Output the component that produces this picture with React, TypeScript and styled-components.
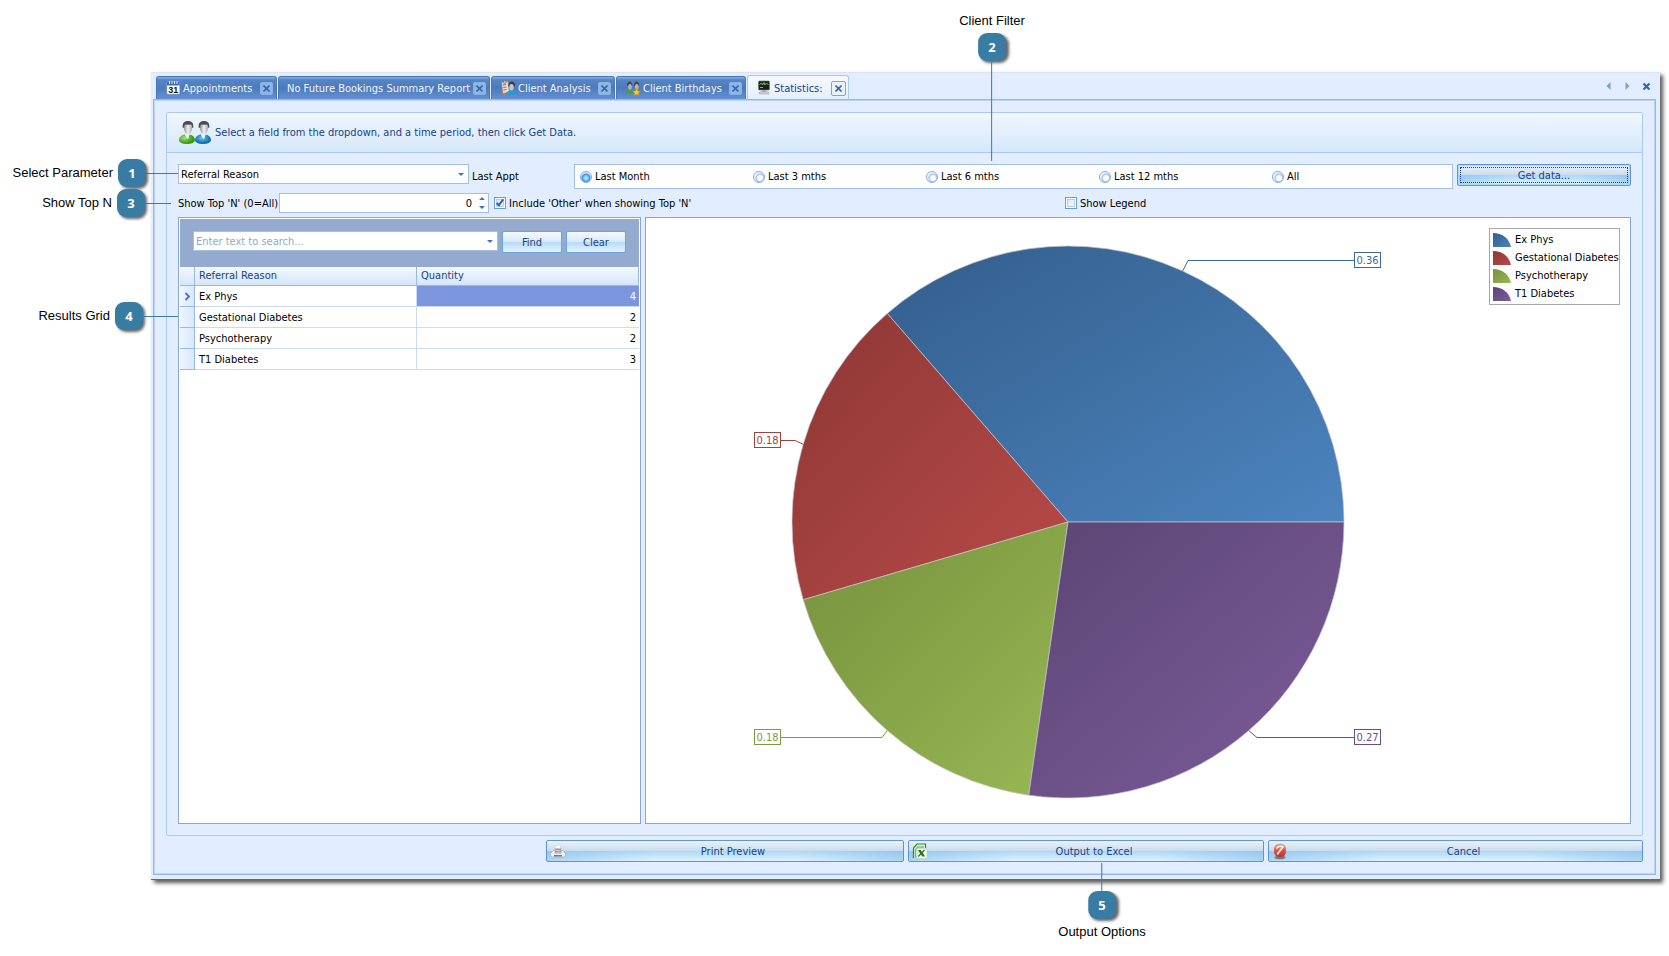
import React, { useState } from 'react';
import styled, { createGlobalStyle, css } from 'styled-components';

const ui = '"DejaVu Sans Condensed", "Noto Sans", sans-serif';
const ink = '#15428b';
const line = '#a9c9f2';

const GlobalStyle = createGlobalStyle`
  *, *::before, *::after { box-sizing: border-box; }
  body { margin: 0; background: #fff; font: 11px/15px ${ui}; color: #000; }
  button, input, select { font: inherit; color: inherit; margin: 0; padding: 0; }
  button { cursor: pointer; }
`;

const Page = styled.div`
  display: flex;
  min-width: 1240px;
  min-height: 100vh;
  padding: 72px 9px 77px 151px;
`;

const Window = styled.main`
  flex: 1;
  min-width: 0;
  display: flex;
  flex-direction: column;
  padding: 0 4px 4px 2px;
  background: #e2eeff;
  border-top: 1px solid #dde4ee;
  border-bottom: 1px solid #3f70ad;
  box-shadow: 3px 3px 4px rgba(0, 0, 0, 0.65);
`;

/* ---------- tab strip ---------- */

const TabStrip = styled.div`
  display: flex;
  align-items: flex-end;
  justify-content: space-between;
  height: 26px;
  padding-left: 3px;
`;

const TabList = styled.div`
  display: flex;
  align-items: flex-end;
  gap: 1px;
`;

const TabBox = styled.div<{ $active?: boolean; $width: number }>`
  display: flex;
  align-items: center;
  width: ${p => p.$width}px;
  height: 23px;
  padding: 0 3px 0 8px;
  border: 1px solid #4a77b5;
  border-bottom: 0;
  border-radius: 3px 3px 0 0;
  color: #f2f7ff;
  background: linear-gradient(#88afe2 0, #5784c4 3px, #4c7abc 50%, #6492d0 100%);
  ${p => p.$active && css`
    height: 25px;
    margin-bottom: -1px;
    padding-right: 2px;
    border-color: ${line};
    color: ${ink};
    background: linear-gradient(#f6faff, #e2eeff);
  `}
`;

const TabButton = styled.button`
  flex: 1;
  display: flex;
  align-items: center;
  gap: 2px;
  border: 0;
  background: none;
  white-space: nowrap;
  text-align: left;
`;

const TabClose = styled.button<{ $active?: boolean }>`
  display: flex;
  align-items: center;
  justify-content: center;
  width: ${p => (p.$active ? 15 : 13)}px;
  height: ${p => (p.$active ? 15 : 13)}px;
  border: 1px solid ${p => (p.$active ? '#7fa6dc' : '#8cb2e4')};
  border-radius: 2px;
  background: ${p => (p.$active ? '#eaf3ff' : '#8fb5e5')};
  color: #3468ae;
`;

const StripNav = styled.div`
  display: flex;
  align-items: center;
  gap: 10px;
  height: 26px;
  padding-right: 5px;
`;

const NavButton = styled.button`
  display: flex;
  align-items: center;
  justify-content: center;
  width: 9px;
  height: 14px;
  border: 0;
  background: none;
  color: #7f9fc9;
`;

/* ---------- frame and group ---------- */

const Frame = styled.section`
  flex: 1;
  display: flex;
  flex-direction: column;
  gap: 4px;
  padding: 12px;
  border: 1px solid #93b9ea;
  box-shadow: inset 0 0 0 1px #b9d4f8;
`;

const Group = styled.div`
  flex: 1;
  display: flex;
  flex-direction: column;
  border: 1px solid ${line};
  border-radius: 2px;
`;

const GroupHeader = styled.header`
  display: flex;
  align-items: center;
  gap: 2px;
  height: 40px;
  padding-left: 10px;
  border-bottom: 1px solid ${line};
  background: linear-gradient(#f0f7ff, #d6e7fb);
  color: ${ink};
`;

const GroupBody = styled.div`
  flex: 1;
  display: flex;
  flex-direction: column;
  gap: 4px;
  padding: 11px;
`;

/* ---------- form parts ---------- */

const FilterRow = styled.div`
  display: flex;
  align-items: flex-start;
`;

const OptionRow = styled.div`
  display: grid;
  grid-template-columns: 887fr 566fr;
  align-items: center;
`;

const Inline = styled.div`
  display: flex;
  align-items: center;
  gap: 5px;
  position: relative;
`;

const Field = styled.div<{ $width?: number }>`
  position: relative;
  height: 20px;
  ${p => (p.$width ? `width: ${p.$width}px;` : 'flex: 1;')}
  > svg { position: absolute; right: 3px; top: 0; pointer-events: none; }
`;

const fieldBox = css`
  display: block;
  width: 100%;
  height: 20px;
  border: 1px solid #a3bfe3;
  border-radius: 0;
  background: #fff;
  outline: 0;
`;

const Select = styled.select`
  ${fieldBox}
  appearance: none;
  padding: 0 18px 0 2px;
`;

const TextBox = styled.input<{ $right?: boolean }>`
  ${fieldBox}
  padding: 0 16px 0 2px;
  text-align: ${p => (p.$right ? 'right' : 'left')};
  &::placeholder { color: #8ea9cc; opacity: 1; }
`;

const TopLabel = styled.label`
  width: 96px;
  white-space: nowrap;
`;

const FieldCaption = styled.span`
  width: 105px;
  height: 25px;
  padding-left: 3px;
  line-height: 26px;
`;

const RadioGroup = styled.div`
  position: relative;
  flex: 1;
  display: grid;
  grid-template-columns: repeat(5, 1fr);
  align-items: center;
  height: 25px;
  margin-right: 4px;
  padding: 0 7px 0 5px;
  border: 1px solid #a3bfe3;
  background: #fff;
`;

const Check = styled.label`
  display: inline-flex;
  align-items: center;
  gap: 3px;
`;

const RadioInput = styled.input`
  appearance: none;
  width: 12px;
  height: 12px;
  border: 1px solid #86abe0;
  border-radius: 50%;
  background: radial-gradient(circle at 60% 60%, #fff 0 2px, #dfeafb 3px, #9bbcea 4px, #eef5ff 5px);
  &:checked {
    background: radial-gradient(circle at 50% 60%, #a6e2ff 0 1px, #55b4f4 3px, #3f86d8 4px, #d8e9ff 5px);
  }
`;

const CheckInput = styled.input`
  appearance: none;
  display: grid;
  place-items: center;
  width: 12px;
  height: 12px;
  border: 1px solid #6c9bdc;
  background: linear-gradient(135deg, #d3e2f7, #fff);
  box-shadow: inset 0 0 0 1px #fff, inset 0 0 0 2px #b3cdf0;
  &:checked::after {
    content: '';
    width: 4px;
    height: 8px;
    margin-top: -2px;
    border: solid #2b62b4;
    border-width: 0 2px 2px 0;
    transform: rotate(38deg);
  }
`;

const Button = styled.button<{ $width?: number; $focus?: boolean; $icon?: boolean }>`
  position: relative;
  width: ${p => (p.$width ? `${p.$width}px` : '100%')};
  height: 22px;
  padding-left: ${p => (p.$icon ? 16 : 0)}px;
  border: 1px solid #5b95e0;
  border-radius: 2px;
  color: ${ink};
  background:
    linear-gradient(90deg, rgba(120, 178, 232, 0.45), rgba(255, 255, 255, 0) 30%, rgba(255, 255, 255, 0) 70%, rgba(120, 178, 232, 0.45)) 0 100% / 100% 50% no-repeat,
    linear-gradient(#edf2f8 0, #c8dcf0 49%, #aed8f6 50%, #ddf3fe 100%);
  > svg { position: absolute; left: 3px; top: 2px; }
  ${p => p.$focus && css`
    outline: 1px dotted #15428b;
    outline-offset: -4px;
    box-shadow: inset 0 0 0 1px #a8dcf8;
  `}
`;

const PanelButton = styled(Button)`
  border-color: #6da3e6;
  background: linear-gradient(#f5f9fe 0, #dbe9f8 49%, #b5daf7 50%, #e3f5ff 100%);
`;

/* ---------- results ---------- */

const Panels = styled.div`
  flex: 1;
  display: grid;
  grid-template-columns: 463px 1fr;
  gap: 4px;
`;

const Panel = styled.div`
  position: relative;
  display: flex;
  flex-direction: column;
  min-width: 0;
  padding: 1px;
  border: 1px solid #86a7d3;
  background: #fff;
`;

const SearchBar = styled.div`
  display: flex;
  align-items: flex-start;
  gap: 4px;
  height: 48px;
  padding: 12px 13px 0;
  background: #94abcf;
`;

const Results = styled.table`
  width: 100%;
  table-layout: fixed;
  border-collapse: separate;
  border-spacing: 0;
`;

const HeadCell = styled.th<{ $width?: number }>`
  ${p => p.$width && `width: ${p.$width}px;`}
  height: 19px;
  padding: 0 4px 2px;
  border: solid #98b9e3;
  border-width: 0 1px 1px 0;
  background: linear-gradient(#f2f8ff, #d5e6fa);
  color: ${ink};
  font-weight: 400;
  text-align: left;
`;

const Cell = styled.td<{ $kind?: 'mark' | 'number'; $selected?: boolean }>`
  height: 21px;
  padding: 0 4px;
  border: solid #cadcf2;
  border-width: 0 1px 1px 0;
  ${p => p.$kind === 'mark' && css`
    padding: 0;
    border-color: #98b9e3;
    background: linear-gradient(90deg, #eef5ff, #d8e8fb);
    > svg { display: block; margin: 0 auto; }
  `}
  ${p => p.$kind === 'number' && css`
    padding-right: 3px;
    border-right: 0;
    text-align: right;
  `}
  ${p => p.$selected && 'background: #7b96de; color: #fff;'}
`;

const ChartSvg = styled.svg`
  flex: 1;
  display: block;
  width: 100%;
  min-height: 0;
`;

const Legend = styled.ul`
  position: absolute;
  top: 10px;
  right: 10px;
  display: grid;
  gap: 3px;
  width: 131px;
  margin: 0;
  padding: 3px;
  list-style: none;
  border: 1px solid #a8a8a8;
  background: #fff;
`;

const LegendItem = styled.li`
  display: flex;
  align-items: center;
  gap: 4px;
  white-space: nowrap;
`;

const Footer = styled.footer`
  display: grid;
  grid-template-columns: 358fr 356fr 375fr;
  gap: 4px;
  padding-left: 380px;
`;

const FooterItem = styled.div`
  position: relative;
  display: flex;
`;

/* ---------- call-outs ---------- */

const Badge = styled.span`
  flex: none;
  width: 28px;
  height: 28px;
  border-radius: 9px;
  background: #387ba3;
  box-shadow: 2px 2px 3px rgba(0, 0, 0, 0.6);
  color: #fff;
  font: bold 13px/28px "Open Sans", sans-serif;
  text-align: center;
`;

const CallText = styled.span`
  font: 13px/16px "Liberation Sans", Arial, sans-serif;
  white-space: nowrap;
  color: #000;
`;

const Lead = styled.span<{ $length: number; $vertical?: boolean }>`
  flex: none;
  background: #387ba3;
  width: ${p => (p.$vertical ? 1 : p.$length)}px;
  height: ${p => (p.$vertical ? p.$length : 1)}px;
`;

const SideCall = styled.div<{ $top: number; $right?: string }>`
  position: absolute;
  z-index: 2;
  top: ${p => p.$top}px;
  right: ${p => p.$right || '100%'};
  display: flex;
  align-items: center;
  ${CallText} { margin-right: 5px; }
`;

const UprightCall = styled.div<{ $left: string; $below?: boolean }>`
  position: absolute;
  z-index: 2;
  left: ${p => p.$left};
  ${p => (p.$below ? 'top: 23px;' : 'bottom: 27px;')}
  display: flex;
  flex-direction: ${p => (p.$below ? 'column' : 'column-reverse')};
  align-items: center;
  transform: translateX(-50%);
  ${CallText} { margin: ${p => (p.$below ? 5 : 4)}px 0; }
`;

type CallProps = { n: number; text: string; length: number };
const CallParts = ({ n, text, length, vertical }: CallProps & { vertical?: boolean }) =>
  vertical ? (
    <><Lead $length={length} $vertical /><Badge>{n}</Badge><CallText>{text}</CallText></>
  ) : (
    <><CallText>{text}</CallText><Badge>{n}</Badge><Lead $length={length} /></>
  );

/* ---------- icons ---------- */

const CrossIcon = ({ size = 7 }: { size?: number }) => (
  <svg width={size} height={size} viewBox="0 0 7 7" aria-hidden="true">
    <path d="M.5 .5l6 6M6.500 .5l-6 6" stroke="currentColor" strokeWidth="1.600" />
  </svg>
);

const CalendarIcon = () => (
  <svg width="16" height="16" viewBox="0 0 16 16" aria-hidden="true">
    <rect x="2" y="2" width="12.500" height="12" rx="1" fill="#fff" stroke="#b9bfc9" strokeWidth=".6" />
    <rect x="2" y="2" width="12.500" height="3.500" fill="#3f6cab" />
    <path d="M4.500 1v3M7 1v3M9.500 1v3M12 1v3" stroke="#e3e9f2" />
    <text x="8.200" y="12.500" textAnchor="middle" fontSize="9" fontWeight="700" fontFamily="Liberation Sans" fill="#111">31</text>
  </svg>
);

const AnalysisIcon = () => (
  <svg width="16" height="16" viewBox="0 0 16 16" aria-hidden="true">
    <path d="M1.500 2L8 1l1.500 11-7 2z" fill="#e2dcd7" stroke="#8e7f76" />
    <path d="M3 5l3-.5M3.300 7.500l3-.5M3.500 10l3-.5" stroke="#857771" />
    <circle cx="4.800" cy="2" r="1.500" fill="#c9c0b8" stroke="#7a6d65" strokeWidth=".6" />
    <path d="M6.500 15c0-3 2-4.500 4.500-4.500s5 1.500 5 4.500z" fill="#2c9bd2" />
    <path d="M8.500 6.500c0-3.500 1-5 3.200-5s3.600 1.500 3.300 5z" fill="#3d3d3f" />
    <ellipse cx="11.500" cy="7.300" rx="2.200" ry="3.300" fill="#c3c6c8" />
    <path d="M1.500 13l4 1.500" stroke="#c98353" strokeWidth="1.500" />
  </svg>
);

const BirthdayIcon = () => (
  <svg width="16" height="16" viewBox="0 0 16 16" aria-hidden="true">
    <path d="M1 13.500c0-3 1-4 3.500-4s3.500 1 3.500 4z" fill="#4c9a45" />
    <path d="M8 13.500c0-3 1-4 3.500-4s4 1 4 4z" fill="#5b8a6a" />
    <path d="M2 6c0-3 .8-4.500 2.600-4.500S7.300 3 7.300 6zM9 6c0-3 .8-4.500 2.600-4.500s2.700 1.500 2.700 4.500z" fill="#4b4642" />
    <ellipse cx="5" cy="6.800" rx="1.800" ry="2.900" fill="#bab5b0" />
    <ellipse cx="11.800" cy="6.800" rx="1.800" ry="2.900" fill="#bab5b0" />
    <path d="M11.500 8.500l1.200 2.400 2.600.3-1.900 1.800.5 2.600-2.400-1.300-2.300 1.300.4-2.600-1.900-1.800 2.700-.3z" fill="#f9cb2e" stroke="#c98e15" strokeWidth=".5" />
  </svg>
);

const MonitorIcon = () => (
  <svg width="16" height="16" viewBox="0 0 16 16" aria-hidden="true">
    <rect x="2.500" y="1" width="11" height="9" rx="1" fill="#1b1d1c" stroke="#6c7071" strokeWidth=".6" />
    <path d="M3.500 4.500l2-1.500 1 2L8 2.500l1 2.500 1.500-2L12.500 5M4 7.500h3" stroke="#5fd42e" fill="none" />
    <path d="M6.500 10h3l1 2h-5z" fill="#a9adb1" />
    <path d="M3 12.500l2-.8h6l2 .8V14H3z" fill="#cdd0d4" stroke="#9a9ea3" strokeWidth=".5" />
  </svg>
);

const Person = ({ x, body }: { x: number; body: string }) => (
  <g transform={`translate(${x} 0)`}>
    <path d="M0 21c0-3.500 4-6 8-6s8 2.500 8 6c0 2.500-3.500 4-8 4s-8-1.500-8-4z" fill={`url(#${body})`} />
    <path d="M5.500 13.500h6l-2.500 6.500c-2-1-3-3-3.500-6.500z" fill="#eef0f1" />
    <ellipse cx="9" cy="9" rx="4" ry="6.500" fill="url(#skin)" />
    <path d="M3.800 9C3 4.500 5 2 9 2s6 2.500 5.200 7l-1.200-.5c0-2-.5-2.700-1.500-3-2 .5-4 .3-5 0-1 .7-1.200 1.700-1.300 3z" fill="#4c4d4f" />
  </g>
);

const PeopleIcon = () => (
  <svg width="36" height="27" viewBox="0 0 36 27" aria-hidden="true">
    <defs>
      <radialGradient id="bodyGreen" cx=".35" cy=".4"><stop offset="0" stopColor="#a4e36c" /><stop offset="1" stopColor="#3c9c22" /></radialGradient>
      <radialGradient id="bodyBlue" cx=".45" cy=".4"><stop offset="0" stopColor="#6cc4ec" /><stop offset="1" stopColor="#1273ae" /></radialGradient>
      <linearGradient id="skin"><stop offset="0" stopColor="#8e9193" /><stop offset=".5" stopColor="#f0f1f1" /><stop offset="1" stopColor="#a4a6a8" /></linearGradient>
    </defs>
    <Person x={2} body="bodyGreen" />
    <Person x={18} body="bodyBlue" />
  </svg>
);

const PrinterIcon = () => (
  <svg width="16" height="16" viewBox="0 0 16 16" aria-hidden="true">
    <path d="M5 2.500L10 1.500 11 7H5z" fill="#f8f8f9" stroke="#c3c5c9" strokeWidth=".5" />
    <path d="M.5 10.500L3 7.500h10l2.500 3v2l-2 1.500h-11l-2-1.500z" fill="#f3f3f4" stroke="#9fa1a5" strokeWidth=".6" />
    <path d="M5 5.500h6l.5 5h-7z" fill="#9a9da2" />
    <path d="M5.500 7.500h5M5.500 9.300h5" stroke="#c6c9cd" />
    <path d="M4 12.800h8" stroke="#56595e" strokeWidth="1.200" />
  </svg>
);

const ExcelIcon = () => (
  <svg width="16" height="16" viewBox="0 0 16 16" aria-hidden="true">
    <path d="M1.500 15V5L5 1h8.500v4" fill="#e4f3e0" stroke="#2c8a2c" strokeWidth="1.200" />
    <path d="M3.500 14V6.500L6 4h6" stroke="#79bd75" strokeWidth="1.300" fill="none" />
    <path d="M5 5.500l10 .5v9.500H5z" fill="#fff" stroke="#b4ceb0" strokeWidth=".7" />
    <path d="M5.800 7h2.900L13.200 13.500h-3z" fill="#1f7a1c" />
    <path d="M12.500 7L6.300 13.500" stroke="#1f7a1c" strokeWidth="1.300" />
  </svg>
);

const CancelIcon = () => (
  <svg width="16" height="17" viewBox="0 0 16 17" aria-hidden="true">
    <defs><linearGradient id="stop" x1="0" y1="0" x2="0" y2="1"><stop offset="0" stopColor="#f5a59d" /><stop offset=".6" stopColor="#e2483c" /><stop offset="1" stopColor="#b8352b" /></linearGradient></defs>
    <ellipse cx="8" cy="14.500" rx="5.500" ry="1.800" fill="#4c5866" opacity=".7" />
    <rect x="2" y=".5" width="12" height="13.500" rx="5.500" fill="url(#stop)" />
    <path d="M4.800 5c1.500-1.500 4-2 6.200-1.200M11 3.800L5.500 11" stroke="#fff" strokeWidth="1.500" fill="none" strokeLinecap="round" />
  </svg>
);

const DropArrow = () => (
  <svg width="10" height="20" viewBox="0 0 10 20" aria-hidden="true"><path d="M2 9h6L5 12z" fill="#3f74bd" /></svg>
);

const SpinArrows = () => (
  <svg width="8" height="20" viewBox="0 0 8 20" aria-hidden="true">
    <path d="M1 7h6L4 4zM1 13h6L4 16z" fill="#3f74bd" />
  </svg>
);

const RowMark = () => (
  <svg width="7" height="9" viewBox="0 0 7 9" aria-hidden="true"><path d="M1.500 1L5 4.500 1.500 8" stroke="#4573b5" strokeWidth="1.800" fill="none" /></svg>
);

/* ---------- data ---------- */

const tabs = [
  { title: 'Appointments', width: 121, icon: <CalendarIcon /> },
  { title: 'No Future Bookings Summary Report', width: 212 },
  { title: 'Client Analysis', width: 124, icon: <AnalysisIcon /> },
  { title: 'Client Birthdays', width: 130, icon: <BirthdayIcon /> },
  { title: 'Statistics:', width: 102, icon: <MonitorIcon />, active: true },
];

const periods = ['Last Month', 'Last 3 mths', 'Last 6 mths', 'Last 12 mths', 'All'];

const rows = [
  { name: 'Ex Phys', count: 4, from: '#335e8c', to: '#4c84be', ink: '#3b689f', at: [707, 42], elbow: 541 },
  { name: 'Gestational Diabetes', count: 2, from: '#8d3735', to: '#b94b48', ink: '#a5403d', at: [107, 222], elbow: 148 },
  { name: 'Psychotherapy', count: 2, from: '#76913d', to: '#98b854', ink: '#7d9a44', at: [107, 519], elbow: 235 },
  { name: 'T1 Diabetes', count: 3, from: '#5b4674', to: '#7d5c9b', ink: '#694f87', at: [707, 519], elbow: 610 },
];

/* ---------- chart ---------- */

const CX = 421;
const CY = 303;
const R = 276;

function PieChart() {
  const total = rows.reduce((sum, r) => sum + r.count, 0);
  const point = (a: number) => [CX + R * Math.cos(a), CY - R * Math.sin(a)];
  let angle = 0;
  return (
    <ChartSvg viewBox="0 0 982 603" role="img" aria-label="Share of clients by referral reason">
      {rows.map((r, i) => {
        const start = angle;
        angle += (r.count / total) * Math.PI * 2;
        const [x1, y1] = point(start);
        const [x2, y2] = point(angle);
        const [mx, my] = point((start + angle) / 2);
        const [lx, ly] = r.at;
        const edge = lx < CX ? lx + 27 : lx;
        return (
          <g key={r.name}>
            <defs>
              <linearGradient id={`slice${i}`} x1="0" y1="0" x2="1" y2="1">
                <stop offset="0" stopColor={r.from} />
                <stop offset="1" stopColor={r.to} />
              </linearGradient>
            </defs>
            <path d={`M${CX} ${CY}L${x1} ${y1}A${R} ${R} 0 0 0 ${x2} ${y2}Z`} fill={`url(#slice${i})`} stroke="#c9c3cf" strokeWidth=".7" />
            <path d={`M${edge} ${ly - 0.5}H${r.elbow}L${mx} ${my}`} fill="none" stroke={r.ink} />
            <rect x={lx + 0.5} y={ly - 8.5} width="26" height="15" fill="#fff" stroke={r.ink} />
            <text x={lx + 13.5} y={ly + 3} textAnchor="middle" fontSize="11" fill={r.ink}>{(r.count / total).toFixed(2)}</text>
          </g>
        );
      })}
    </ChartSvg>
  );
}

export default function App() {
  const [period, setPeriod] = useState(0);
  return (
    <>
      <GlobalStyle />
      <Page>
        <Window>
          <TabStrip>
            <TabList role="tablist">
              {tabs.map(t => (
                <TabBox key={t.title} $width={t.width} $active={t.active}>
                  <TabButton role="tab" aria-selected={!!t.active}>{t.icon}{t.title}</TabButton>
                  <TabClose aria-label={`Close ${t.title}`} $active={t.active}><CrossIcon /></TabClose>
                </TabBox>
              ))}
            </TabList>
            <StripNav>
              <NavButton aria-label="Scroll tabs left">
                <svg width="5" height="8" viewBox="0 0 5 8"><path d="M4.500 0v8L.5 4z" fill="currentColor" /></svg>
              </NavButton>
              <NavButton aria-label="Scroll tabs right">
                <svg width="5" height="8" viewBox="0 0 5 8"><path d="M.5 0v8l4-4z" fill="currentColor" /></svg>
              </NavButton>
              <NavButton aria-label="Close tab">
                <svg width="9" height="9" viewBox="0 0 9 9"><path d="M1.500 1.500l6 6M7.500 1.500l-6 6" stroke="#2f68b2" strokeWidth="2.200" /></svg>
              </NavButton>
            </StripNav>
          </TabStrip>

          <Frame>
            <Group>
              <GroupHeader><PeopleIcon />Select a field from the dropdown, and a time period, then click Get Data.</GroupHeader>
              <GroupBody>
                <FilterRow>
                  <Field $width={291}>
                    <SideCall $top={-5}><CallParts n={1} text="Select Parameter" length={32} /></SideCall>
                    <Select aria-label="Parameter" defaultValue="Referral Reason"><option>Referral Reason</option></Select>
                    <DropArrow />
                  </Field>
                  <FieldCaption id="last-appt">Last Appt</FieldCaption>
                  <RadioGroup role="radiogroup" aria-labelledby="last-appt">
                    <UprightCall $left="417px"><CallParts n={2} text="Client Filter" length={100} vertical /></UprightCall>
                    {periods.map((p, i) => (
                      <Check key={p}>
                        <RadioInput type="radio" name="period" checked={period === i} onChange={() => setPeriod(i)} />{p}
                      </Check>
                    ))}
                  </RadioGroup>
                  <Button $width={174} $focus>Get data...</Button>
                </FilterRow>

                <OptionRow>
                  <Inline>
                    <SideCall $top={-4} $right="calc(100% + 7px)"><CallParts n={3} text="Show Top N" length={26} /></SideCall>
                    <TopLabel htmlFor="top-n">Show Top 'N' (0=All)</TopLabel>
                    <Field $width={210}><TextBox id="top-n" $right defaultValue="0" /><SpinArrows /></Field>
                    <Check><CheckInput type="checkbox" defaultChecked />Include 'Other' when showing Top 'N'</Check>
                  </Inline>
                  <Check><CheckInput type="checkbox" />Show Legend</Check>
                </OptionRow>

                <Panels>
                  <Panel>
                    <SideCall $top={84} $right="calc(100% + 1px)"><CallParts n={4} text="Results Grid" length={35} /></SideCall>
                    <SearchBar>
                      <Field><TextBox aria-label="Search" placeholder="Enter text to search..." /><DropArrow /></Field>
                      <PanelButton $width={60}>Find</PanelButton>
                      <PanelButton $width={60}>Clear</PanelButton>
                    </SearchBar>
                    <Results>
                      <thead>
                        <tr><HeadCell $width={15} aria-label="Current row" /><HeadCell $width={222}>Referral Reason</HeadCell><HeadCell>Quantity</HeadCell></tr>
                      </thead>
                      <tbody>
                        {rows.map((r, i) => (
                          <tr key={r.name}>
                            <Cell $kind="mark">{i === 0 && <RowMark />}</Cell>
                            <Cell>{r.name}</Cell>
                            <Cell $kind="number" $selected={i === 0}>{r.count}</Cell>
                          </tr>
                        ))}
                      </tbody>
                    </Results>
                  </Panel>
                  <Panel>
                    <PieChart />
                    <Legend>
                      {rows.map((r, i) => (
                        <LegendItem key={r.name}>
                          <svg width="18" height="14" viewBox="0 0 18 14" aria-hidden="true"><path d="M0 0C9 0 16 5 18 14H0z" fill={`url(#slice${i})`} /></svg>
                          {r.name}
                        </LegendItem>
                      ))}
                    </Legend>
                  </Panel>
                </Panels>
              </GroupBody>
            </Group>

            <Footer>
              <FooterItem><Button $icon><PrinterIcon />Print Preview</Button></FooterItem>
              <FooterItem>
                <UprightCall $left="194px" $below><CallParts n={5} text="Output Options" length={28} vertical /></UprightCall>
                <Button $icon><ExcelIcon />Output to Excel</Button>
              </FooterItem>
              <FooterItem><Button $icon><CancelIcon />Cancel</Button></FooterItem>
            </Footer>
          </Frame>
        </Window>
      </Page>
    </>
  );
}
